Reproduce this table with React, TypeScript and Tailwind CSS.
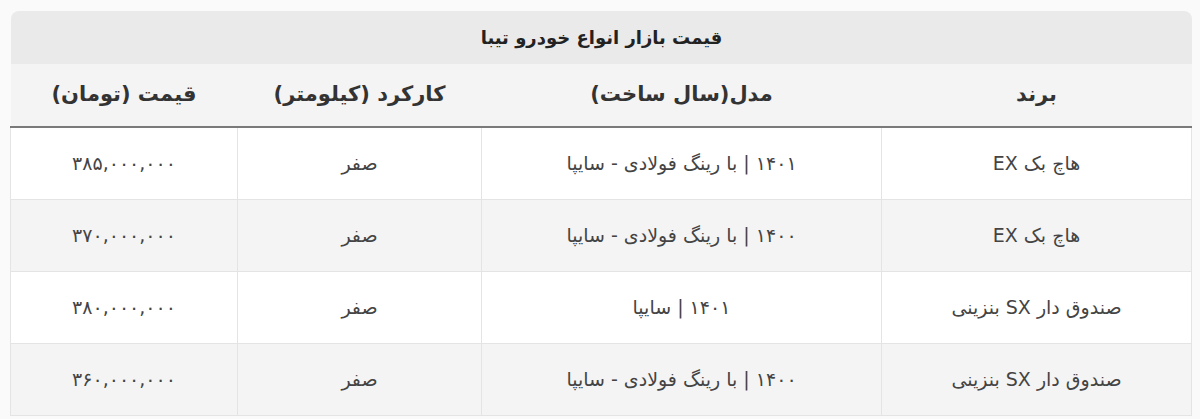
import React from "react";

type Row = {
  brand: string;
  model: string;
  mileage: string;
  price: string;
};

const rows: Row[] = [
  { brand: "هاچ بک EX", model: "۱۴۰۱ | با رینگ فولادی - سایپا", mileage: "صفر", price: "۳۸۵,۰۰۰,۰۰۰" },
  { brand: "هاچ بک EX", model: "۱۴۰۰ | با رینگ فولادی - سایپا", mileage: "صفر", price: "۳۷۰,۰۰۰,۰۰۰" },
  { brand: "صندوق دار SX بنزینی", model: "۱۴۰۱ | سایپا", mileage: "صفر", price: "۳۸۰,۰۰۰,۰۰۰" },
  { brand: "صندوق دار SX بنزینی", model: "۱۴۰۰ | با رینگ فولادی - سایپا", mileage: "صفر", price: "۳۶۰,۰۰۰,۰۰۰" },
];

const headers = ["برند", "مدل(سال ساخت)", "کارکرد (کیلومتر)", "قیمت (تومان)"];

export default function App() {
  return (
    <div
      className="min-h-[419px] bg-[#fafafa] pl-[11px] pt-[11px]"
      style={{ fontFamily: '"DejaVu Sans", sans-serif' }}
    >
      <div dir="rtl" className="w-[1181px]">
        <div className="flex h-[53px] items-center justify-center rounded-t-lg bg-[#eaeaea] text-[18px] font-bold text-[#222]">
          قیمت بازار انواع خودرو تیبا
        </div>
        <table className="w-full table-fixed border-collapse">
          <colgroup>
            <col className="w-[310px]" />
            <col className="w-[400px]" />
            <col className="w-[244px]" />
            <col className="w-[227px]" />
          </colgroup>
          <thead>
            <tr className="h-[63px] border-b-2 border-[#7a7a7a] bg-[#f4f4f4]">
              {headers.map((h) => (
                <th key={h} className="text-center text-[21px] font-bold text-[#333]">
                  {h}
                </th>
              ))}
            </tr>
          </thead>
          <tbody>
            {rows.map((r, i) => (
              <tr
                key={i}
                className={`h-[72px] ${i % 2 === 0 ? "bg-white" : "bg-[#f4f4f4]"}`}
              >
                {[r.brand, r.model, r.mileage, r.price].map((c, j) => (
                  <td
                    key={j}
                    className="border border-[#e4e4e4] text-center text-[19px] text-[#444]"
                  >
                    {c}
                  </td>
                ))}
              </tr>
            ))}
          </tbody>
        </table>
      </div>
    </div>
  );
}
